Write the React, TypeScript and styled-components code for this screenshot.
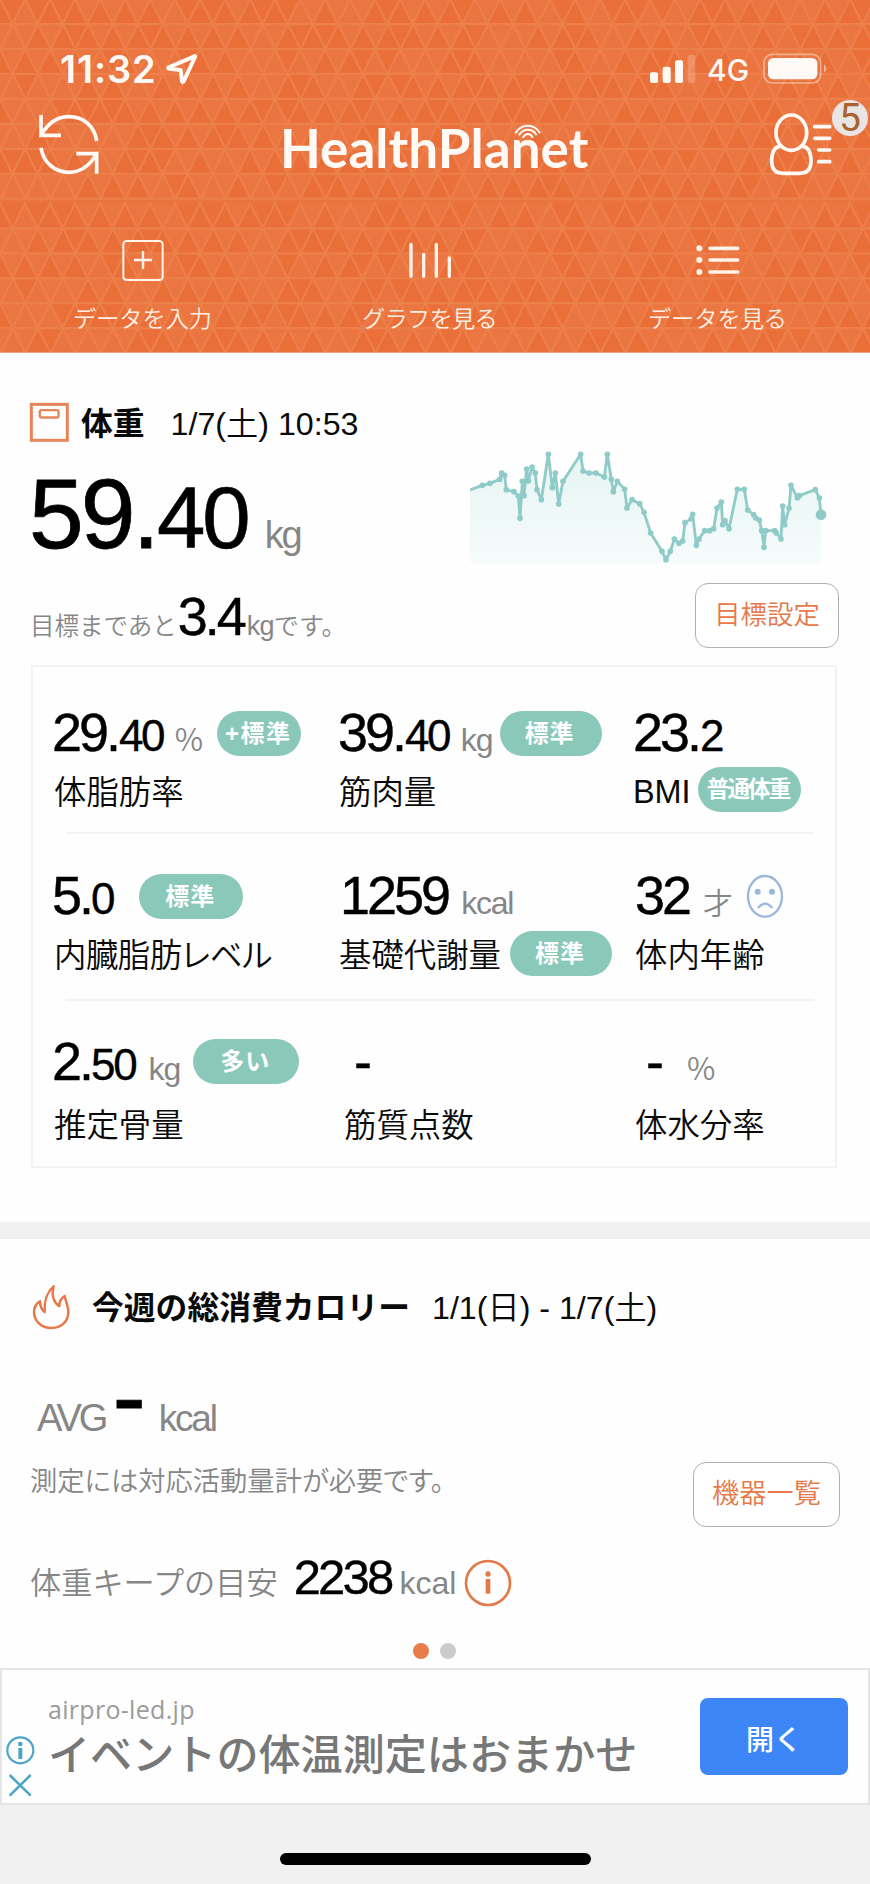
import React from "react";
import styled, { createGlobalStyle } from "styled-components";

const sans = `"Liberation Sans", "Noto Sans CJK JP", sans-serif`;
const orange = "#e5794a";
const teal = "#8ac8ba";
const gray = "#868686";

const GlobalStyle = createGlobalStyle`
  * { box-sizing: border-box; }
  body { margin: 0; background: #f1f1f1; font-family: ${sans}; color: #0a0a0a; }
  svg { display: block; flex: none; }
`;

const Screen = styled.div`
  width: 870px;
  height: 1884px;
  display: flex;
  flex-direction: column;
  background: #fefefe;
  overflow: hidden;
`;

/* ---------- header ---------- */

const Header = styled.header`
  position: relative;
  height: 353px;
  background: #eb743e;
  color: #fffaf5;
  overflow: hidden;
`;

const PatternSvg = styled.svg`
  position: absolute;
  inset: 0;
`;

const HeaderBody = styled.div`
  position: relative;
`;

const StatusBar = styled.div`
  display: flex;
  align-items: flex-start;
  height: 112px;
  padding: 50px 41px 0 60px;
`;

const Clock = styled.span`
  width: 103px;
  font: 600 38px/38px Inter, sans-serif;
  letter-spacing: 0.9px;
  white-space: nowrap;
`;

const Network = styled.span`
  width: 64px;
  padding: 5px 0 0 9px;
  font: 500 30px/30px Inter, sans-serif;
  white-space: nowrap;
`;

const Push = styled.span`
  flex: 1;
`;

const TitleBar = styled.div`
  display: flex;
  justify-content: space-between;
  height: 65px;
  padding: 0 35px 0 36px;
`;

const Logo = styled.div`
  position: relative;
  margin-top: 9px;
  margin-left: 1px;
  width: 312px;
  font: 700 53px/53px Lato, sans-serif;
  letter-spacing: 0.05px;
  white-space: nowrap;
`;

const LogoWaves = styled.svg`
  position: absolute;
  left: 234px;
  top: 3px;
`;

const Account = styled.div`
  position: relative;
`;

const Badge = styled.span`
  position: absolute;
  left: 64px;
  top: -12px;
  width: 36px;
  height: 36px;
  border-radius: 50%;
  background: #e9e5e5;
  color: #a9632f;
  font: 400 39px/36px Roboto, sans-serif;
  text-align: center;
`;

const Tabs = styled.nav`
  display: grid;
  grid-template-columns: 287px 287px 289px;
  margin-left: -1px;
  padding-top: 63px;
`;

const Tab = styled.div<{ $track?: number }>`
  display: flex;
  flex-direction: column;
  align-items: center;
  gap: 25px;
  font-size: 23.2px;
  line-height: 24px;
  font-weight: 350;
  letter-spacing: ${(p) => p.$track ?? 0}px;
  color: #ffeee2;
`;

/* ---------- sections ---------- */

const WeightSection = styled.section`
  height: 869px;
  padding: 49px 31px 0 29px;
`;

const CalorieSection = styled.section`
  height: 429px;
  padding: 43px 30px 0;
`;

const Band = styled.div`
  height: 17px;
  background: #f0f0f0;
`;

const TitleRow = styled.div<{ $h: number }>`
  display: flex;
  align-items: center;
  height: ${(p) => p.$h}px;
  font-size: 32.2px;
  line-height: 32px;
  white-space: nowrap;
`;

const Title = styled.h2<{ $gap: number }>`
  margin: 2px 0 0 ${(p) => p.$gap}px;
  font-size: 31.8px;
  line-height: 32px;
  font-weight: 700;
`;

const When = styled.span<{ $gap: number }>`
  margin-left: ${(p) => p.$gap}px;
  margin-top: 2px;
  font-weight: 350;
`;

const Split = styled.div<{ $top: number; $h: number }>`
  display: flex;
  justify-content: space-between;
  align-items: flex-start;
  margin-top: ${(p) => p.$top}px;
  height: ${(p) => p.$h}px;
`;

const Line = styled.div<{ $top?: number; $left?: number; $h?: number }>`
  display: flex;
  align-items: baseline;
  margin-top: ${(p) => p.$top ?? 0}px;
  margin-left: ${(p) => p.$left ?? 0}px;
  height: ${(p) => (p.$h ? `${p.$h}px` : "auto")};
  white-space: nowrap;
`;

const Num = styled.span<{ $size: number; $track: number; $gap?: number }>`
  font-size: ${(p) => p.$size}px;
  line-height: 1;
  letter-spacing: ${(p) => p.$track}px;
  margin-left: ${(p) => p.$gap ?? 0}px;
  color: #000;
  -webkit-text-stroke: ${(p) => p.$size / 130}px #000;
`;

const Unit = styled.span<{ $size: number; $track?: number; $gap?: number; $cjk?: boolean }>`
  font-family: ${(p) => (p.$cjk ? `"Noto Sans CJK JP", sans-serif` : sans)};
  font-size: ${(p) => p.$size}px;
  line-height: 1;
  letter-spacing: ${(p) => p.$track ?? 0}px;
  margin-left: ${(p) => p.$gap ?? 0}px;
  font-weight: 350;
  color: ${gray};
`;

const Note = styled(Unit)`
  font-feature-settings: "palt";
`;

const OutlineButton = styled.button<{ $w: number; $h: number; $size: number }>`
  width: ${(p) => p.$w}px;
  height: ${(p) => p.$h}px;
  padding: 0 0 1px;
  border: 1px solid #b0b0b0;
  border-radius: 13px;
  background: #fff;
  color: ${orange};
  font: 350 ${(p) => p.$size}px/30px ${sans};
`;

/* ---------- metric card ---------- */

const Card = styled.div`
  width: 806px;
  margin: 17px 0 0 2px;
  border: 2px solid #f3f3f3;
`;

const CardRow = styled.div<{ $top: number }>`
  display: grid;
  grid-template-columns: 285px 296px 1fr;
  height: 165px;
  padding: ${(p) => p.$top}px 0 0 19px;
`;

const Divider = styled.div`
  height: 2px;
  margin: 0 21px 0 33px;
  background: #f4f4f4;
`;

const MetricName = styled.div<{ $top: number; $left: number; $track?: number }>`
  display: flex;
  margin: ${(p) => p.$top}px 0 0 ${(p) => p.$left}px;
  height: 32px;
  font-size: 32.4px;
  line-height: 32px;
  font-weight: 350;
  font-feature-settings: "palt";
  letter-spacing: ${(p) => p.$track ?? 0}px;
  white-space: nowrap;
`;

const Pill = styled.span<{ $w: number; $gap: number; $top: number; $size?: number; $track?: number }>`
  flex: none;
  align-self: flex-start;
  width: ${(p) => p.$w}px;
  height: 45px;
  padding-right: 2px;
  margin: ${(p) => p.$top}px 0 0 ${(p) => p.$gap}px;
  border-radius: 23px;
  background: ${teal};
  color: #fff;
  font-size: ${(p) => p.$size ?? 24}px;
  line-height: 45px;
  font-weight: 700;
  letter-spacing: ${(p) => p.$track ?? 1}px;
  text-align: center;
`;

const FaceSvg = styled.svg`
  align-self: flex-start;
  margin: 4px 0 0 12px;
`;

const InfoSvg = styled.svg`
  align-self: flex-start;
  margin: 6px 0 0 8px;
`;

const Dots = styled.div`
  display: flex;
  justify-content: center;
  gap: 11px;
  margin: 38px 1px 0 0;
`;

const Dot = styled.span<{ $on?: boolean }>`
  width: 16px;
  height: 16px;
  border-radius: 50%;
  background: ${(p) => (p.$on ? "#e97c4b" : "#cbcbcb")};
`;

/* ---------- ad and footer ---------- */

const Ad = styled.aside`
  display: flex;
  height: 137px;
  border: 2px solid #e5e5e7;
  background: #fefefe;
`;

const AdMarks = styled.div`
  width: 46px;
  padding: 64px 0 0 3px;
`;

const AdText = styled.div`
  flex: 1;
  padding-top: 24px;
  white-space: nowrap;
`;

const AdHost = styled.div`
  font: 400 25px/30px "Open Sans", sans-serif;
  letter-spacing: 0.3px;
  color: #9b9b9b;
`;

const AdHeadline = styled.div`
  margin-top: 7px;
  font: 500 42.1px/50px ${sans};
  color: #777;
`;

const AdButton = styled.button`
  width: 148px;
  height: 77px;
  margin: 28px 20px 0 0;
  padding: 8px 0 0;
  border: 0;
  border-radius: 8px;
  background: #3d86f7;
  color: #fff;
  font: 500 28px/30px ${sans};
`;

const Footer = styled.footer`
  flex: 1;
  padding-top: 48px;
  background: #f1f1f1;
`;

const HomeBar = styled.div`
  width: 311px;
  height: 12px;
  margin-left: 280px;
  border-radius: 6px;
  background: #000;
`;

/* ---------- drawings ---------- */

const hash = (a: number, b: number) => {
  const v = Math.sin(a * 12.9898 + b * 78.233) * 43758.5453;
  return v - Math.floor(v);
};

function Pattern() {
  const tiles: React.ReactNode[] = [];
  const lines: React.ReactNode[] = [];
  const rowH = 24.95;
  const bands = [
    { top: -0.9, count: 8 },
    { top: 203.4, count: 6 },
  ];
  bands.forEach((band, bi) => {
    for (let r = 0; r < band.count; r++) {
      const y = band.top + r * rowH;
      const y2 = y + rowH;
      const shift = r % 2 === 0 ? 0 : 13;
      for (let k = -1; k < 37; k++) {
        const ax = shift + k * 25;
        const up = hash(k + 3, r + 1);
        const down = hash(k + 41, r + 17);
        tiles.push(
          <path
            key={`u${bi}-${r}-${k}`}
            d={`M${ax} ${y}L${ax + 12.5} ${y2}H${ax - 12.5}Z`}
            fill={up > 0.35 ? "#e96e38" : "#eb7540"}
          />,
          <path
            key={`d${bi}-${r}-${k}`}
            d={`M${ax} ${y}H${ax + 25}L${ax + 12.5} ${y2}Z`}
            fill={down > 0.65 ? "#ea6f39" : "#eb7641"}
          />,
        );
        lines.push(
          <path key={`l${bi}-${r}-${k}`} d={`M${ax - 12.5} ${y2}L${ax} ${y}L${ax + 12.5} ${y2}`} />,
        );
      }
      lines.push(<path key={`h${bi}-${r}`} d={`M0 ${y2}H870`} />);
    }
  });
  return (
    <PatternSvg width="870" height="353" viewBox="0 0 870 353">
      {tiles}
      <g stroke="#ed7f4b" strokeWidth="2.2" fill="none">{lines}</g>
      <path d="M0 352.5H870" stroke="#f0a07a" />
    </PatternSvg>
  );
}

const samples: [number, number][] = [
  [105, 210], [142, 196], [165, 190], [194, 178], [200, 159], [209, 166], [214, 209], [237, 215], [250, 228],
  [255, 295], [262, 184], [267, 227], [275, 147], [280, 183], [291, 141], [301, 159], [306, 209], [319, 239],
  [340, 103], [352, 203], [361, 159], [371, 252], [384, 184], [437, 103], [444, 153], [462, 159], [483, 159],
  [508, 171], [517, 103], [529, 178], [535, 215], [547, 184], [569, 208], [576, 264], [591, 239], [614, 251],
  [627, 277], [647, 339], [681, 394], [693, 419], [706, 394], [718, 357], [732, 370], [743, 363], [750, 308],
  [769, 296], [773, 283], [784, 376], [792, 357], [809, 332], [824, 332], [836, 326], [846, 264], [859, 246],
  [863, 314], [870, 302], [882, 326], [907, 208], [928, 208], [938, 270], [956, 284], [962, 294], [973, 300],
  [980, 332], [987, 382], [992, 332], [1019, 332], [1024, 339], [1038, 357], [1043, 258], [1049, 314],
  [1062, 265], [1068, 196], [1087, 233], [1093, 227], [1141, 209], [1153, 234], [1158, 284],
];

function WeightChart() {
  const line = samples.map((p) => p.join(",")).join(" ");
  return (
    <svg width="369" height="126" viewBox="105 81 1107 378">
      <defs>
        <linearGradient id="area" x1="0" y1="0" x2="0" y2="1">
          <stop offset="0" stopColor="#e6f4f3" />
          <stop offset="1" stopColor="#f6fcfb" />
        </linearGradient>
      </defs>
      <polygon points={`105,430 ${line} 1158,430`} fill="url(#area)" />
      <polyline points={line} fill="none" stroke="#8fcbc8" strokeWidth="8.5" strokeLinejoin="round" />
      {samples.slice(1, -1).map(([x, y], i) => (
        <circle key={i} cx={x} cy={y} r="8.5" fill="#8fcbc8" />
      ))}
      <circle cx="1158" cy="284" r="16" fill="#8fcbc8" />
    </svg>
  );
}

export default function App() {
  return (
    <>
      <GlobalStyle />
      <Screen>
        <Header>
          <Pattern />
          <HeaderBody>
            <StatusBar>
              <Clock>11:32</Clock>
              <svg width="36" height="36" viewBox="490 150 108 108">
                <path d="M584 169L507 202Q504 205 508 206L543 210L547 244Q549 249 552 244L586 171Q587 167 584 169Z" fill="none" stroke="#fffaf5" strokeWidth="12" strokeLinejoin="round" />
              </svg>
              <Push />
              <svg width="50" height="36" viewBox="636 150 150 108" fill="#fffaf5">
                <rect x="642" y="217" width="24" height="32" rx="6" />
                <rect x="680" y="200" width="24" height="49" rx="6" />
                <rect x="717" y="181" width="24" height="68" rx="6" />
                <rect x="755" y="164" width="23" height="85" rx="6" opacity=".2" />
              </svg>
              <Network>4G</Network>
              <svg width="67" height="36" viewBox="980 150 201 108">
                <rect x="986" y="163" width="170" height="86" rx="25" fill="none" stroke="#fffaf5" strokeOpacity=".45" strokeWidth="5" />
                <rect x="998" y="174" width="148" height="64" rx="16" fill="#fffaf5" />
                <path d="M1166 193Q1180 206 1166 219Z" fill="#fffaf5" opacity=".5" />
              </svg>
            </StatusBar>
            <TitleBar>
              <svg width="67" height="65" viewBox="108 336 201 195" fill="none" stroke="#fffaf5" strokeWidth="11">
                <path d="M123 345V406H183" />
                <path d="M123 406C146 366 172 350 206 350C252 350 284 380 290 423" />
                <path d="M123 443C130 487 164 517 207 517C241 517 268 500 290 461" />
                <path d="M229 461H290V521" />
              </svg>
              <Logo>
                HealthPlanet
                <LogoWaves width="28" height="16" viewBox="238 375 84 48" fill="none" stroke="#fffaf5" strokeWidth="6">
                  <path d="M242 403C260 373 299 373 316 403" />
                  <path d="M253 409C266 387 293 387 306 409" />
                  <path d="M264 416C273 401 286 401 295 416" />
                </LogoWaves>
              </Logo>
              <Account>
                <svg width="67" height="65" viewBox="1000 336 201 195" fill="none" stroke="#fffaf5" strokeWidth="11" strokeLinecap="round">
                  <ellipse cx="1070" cy="398" rx="46" ry="53" />
                  <path d="M1034 439C1015 443 1011 462 1011 484C1011 508 1022 520 1045 520H1095C1118 520 1129 508 1129 484C1129 462 1125 443 1106 439" />
                  <path d="M1140 380H1185M1140 415H1185M1152 450H1185M1152 485H1185" />
                </svg>
                <Badge>5</Badge>
              </Account>
            </TitleBar>
            <Tabs>
              <Tab>
                <svg width="60" height="42" viewBox="339 720 180 126" fill="none" stroke="#fff3ea" strokeWidth="6">
                  <rect x="370" y="723" width="118" height="117" rx="10" />
                  <path d="M402 780H456M429 753V807" strokeWidth="7" />
                </svg>
                データを入力
              </Tab>
              <Tab $track={-0.7}>
                <svg width="60" height="42" viewBox="1201 720 180 126" fill="none" stroke="#fff3ea" strokeWidth="10" strokeLinecap="round">
                  <path d="M1234 733V829M1272 763V829M1310 733V829M1349 774V829" />
                </svg>
                グラフを見る
              </Tab>
              <Tab>
                <svg width="60" height="42" viewBox="757 720 180 126" fill="#fff3ea">
                  <circle cx="791" cy="745" r="9" />
                  <circle cx="791" cy="780" r="9" />
                  <circle cx="791" cy="816" r="9" />
                  <path d="M823 745H906M823 780H906M823 816H906" stroke="#fff3ea" strokeWidth="11" strokeLinecap="round" />
                </svg>
                データを見る
              </Tab>
            </Tabs>
          </HeaderBody>
        </Header>

        <WeightSection>
          <TitleRow $h={41}>
            <svg width="41" height="41" viewBox="88 68 122 122" fill="none" stroke="#e5855a" strokeWidth="9">
              <rect x="95" y="75" width="107" height="107" />
              <rect x="120" y="92" width="56" height="22" rx="6" strokeWidth="7" />
            </svg>
            <Title $gap={11}>体重</Title>
            <When $gap={26}>1/7(土) 10:53</When>
          </TitleRow>

          <Split $top={4} $h={126}>
            <Line $top={18}>
              <Num $size={98.5} $track={-3}>59</Num>
              <Num $size={98.5} $track={-3}>.</Num>
              <Num $size={87} $track={-3}>40</Num>
              <Unit $size={38} $track={-2.3} $gap={17}>kg</Unit>
            </Line>
            <WeightChart />
          </Split>

          <Split $top={10} $h={65}>
            <Line $top={6} $left={1}>
              <Unit $size={24.5}>目標まであと</Unit>
              <Num $size={54} $track={-3} $gap={1}>3.4</Num>
              <Unit $size={27} $track={-0.8} $gap={3}>kg</Unit>
              <Unit $size={25.2}>です。</Unit>
            </Line>
            <OutlineButton $w={144} $h={65} $size={26.4}>目標設定</OutlineButton>
          </Split>

          <Card>
            <CardRow $top={38}>
              <div>
                <Line $h={54}>
                  <Num $size={54} $track={-3}>29.</Num>
                  <Num $size={44} $track={-2.6} $gap={1}>40</Num>
                  <Unit $size={31} $gap={12} $cjk>%</Unit>
                  <Pill $w={84} $gap={14} $top={6} $track={1.5}>+標準</Pill>
                </Line>
                <MetricName $top={18} $left={2}>体脂肪率</MetricName>
              </div>
              <div>
                <Line $h={54}>
                  <Num $size={54} $track={-3} $gap={1}>39.</Num>
                  <Num $size={44} $track={-2.6} $gap={1}>40</Num>
                  <Unit $size={32} $track={-1} $gap={12}>kg</Unit>
                  <Pill $w={102} $gap={7} $top={6}>標準</Pill>
                </Line>
                <MetricName $top={18} $left={2}>筋肉量</MetricName>
              </div>
              <div>
                <Line $h={54}>
                  <Num $size={54} $track={-3}>23.</Num>
                  <Num $size={44} $track={-2.3} $gap={1}>2</Num>
                </Line>
                <MetricName $top={17} $left={0}>
                  BMI
                  <Pill $w={103} $gap={7} $top={-9} $size={22.5} $track={-1.8}>普通体重</Pill>
                </MetricName>
              </div>
            </CardRow>
            <Divider />
            <CardRow $top={34}>
              <div>
                <Line $h={54}>
                  <Num $size={54} $track={-3}>5.</Num>
                  <Num $size={44} $track={-2.3}>0</Num>
                  <Pill $w={104} $gap={26} $top={6}>標準</Pill>
                </Line>
                <MetricName $top={18} $left={2} $track={-0.5}>内臓脂肪レベル</MetricName>
              </div>
              <div>
                <Line $h={54}>
                  <Num $size={54} $track={-3} $gap={3}>1259</Num>
                  <Unit $size={32} $track={-1.2} $gap={13}>kcal</Unit>
                </Line>
                <MetricName $top={18} $left={2}>
                  基礎代謝量
                  <Pill $w={102} $gap={9} $top={-9}>標準</Pill>
                </MetricName>
              </div>
              <div>
                <Line $h={54}>
                  <Num $size={54} $track={-3} $gap={2}>32</Num>
                  <Unit $size={30} $gap={14}>才</Unit>
                  <FaceSvg width="40" height="48" viewBox="930 637 120 144" fill="none" stroke="#9bb8dc" strokeWidth="7">
                    <ellipse cx="990" cy="710" rx="51" ry="61" />
                    <circle cx="968" cy="696" r="9" fill="#9bb8dc" stroke="none" />
                    <circle cx="1011" cy="696" r="9" fill="#9bb8dc" stroke="none" />
                    <path d="M969 745Q990 719 1012 745" strokeWidth="7" />
                  </FaceSvg>
                </Line>
                <MetricName $top={18} $left={2}>体内年齢</MetricName>
              </div>
            </CardRow>
            <Divider />
            <CardRow $top={33}>
              <div>
                <Line $h={54}>
                  <Num $size={54} $track={-3}>2.</Num>
                  <Num $size={44} $track={-2.3}>50</Num>
                  <Unit $size={32} $track={-1} $gap={13}>kg</Unit>
                  <Pill $w={106} $gap={13} $top={5}>多い</Pill>
                </Line>
                <MetricName $top={22} $left={2}>推定骨量</MetricName>
              </div>
              <div>
                <Line $h={54}>
                  <Num $size={54} $track={0} $gap={17}>-</Num>
                </Line>
                <MetricName $top={22} $left={7}>筋質点数</MetricName>
              </div>
              <div>
                <Line $h={54}>
                  <Num $size={54} $track={0} $gap={13}>-</Num>
                  <Unit $size={31} $gap={23} $cjk>%</Unit>
                </Line>
                <MetricName $top={22} $left={2}>体水分率</MetricName>
              </div>
            </CardRow>
          </Card>
        </WeightSection>

        <Band />

        <CalorieSection>
          <TitleRow $h={50}>
            <svg width="41" height="50" viewBox="91 905 123 150" fill="none" stroke="#e5794a" strokeWidth="7.5" strokeLinejoin="round">
              <path d="M162 918C148 930 133 948 135 995C125 988 121 978 121 963C107 971 103 985 103 995C104 1025 127 1043 156 1043C186 1043 206 1023 206 994C206 979 199 966 195 947C184 954 179 963 179 977C168 972 153 952 162 918Z" />
            </svg>
            <Title $gap={21}>今週の総消費カロリー</Title>
            <When $gap={22}>1/1(日) - 1/7(土)</When>
          </TitleRow>

          <Line $top={14} $left={7} $h={100}>
            <Unit $size={38} $track={-3}>AVG</Unit>
            <Num $size={100} $track={0} $gap={7}>-</Num>
            <Unit $size={37} $track={-2.2} $gap={13}>kcal</Unit>
          </Line>

          <Split $top={16} $h={64}>
            <Line $top={6}>
              <Note $size={27.3}>測定には対応活動量計が必要です。</Note>
            </Line>
            <OutlineButton $w={147} $h={65} $size={27.2}>機器一覧</OutlineButton>
          </Split>

          <Line $top={27} $h={52}>
            <Unit $size={31.2}>体重キープの目安</Unit>
            <Num $size={49} $track={-2.8} $gap={16}>2238</Num>
            <Unit $size={32} $gap={8}>kcal</Unit>
            <InfoSvg width="48" height="48" viewBox="86 613 144 144" fill="#e07a48">
              <circle cx="158" cy="685" r="66" fill="none" stroke="#e07a48" strokeWidth="8" />
              <circle cx="158" cy="658" r="8" />
              <rect x="151" y="673" width="14" height="44" />
            </InfoSvg>
          </Line>

          <Dots>
            <Dot $on />
            <Dot />
          </Dots>
        </CalorieSection>

        <Ad>
          <AdMarks>
            <svg width="30" height="66" viewBox="14 222 90 198" fill="none" stroke="#4ba3c7" strokeWidth="6.5">
              <circle cx="60" cy="271" r="39" />
              <circle cx="60" cy="252" r="7" fill="#4ba3c7" stroke="none" />
              <path d="M60 264V297" strokeWidth="12" />
              <path d="M28 345L91 407M91 345L28 407" strokeWidth="7.5" />
            </svg>
          </AdMarks>
          <AdText>
            <AdHost>airpro-led.jp</AdHost>
            <AdHeadline>イベントの体温測定はおまかせ</AdHeadline>
          </AdText>
          <AdButton>開く</AdButton>
        </Ad>
        <Footer>
          <HomeBar />
        </Footer>
      </Screen>
    </>
  );
}
